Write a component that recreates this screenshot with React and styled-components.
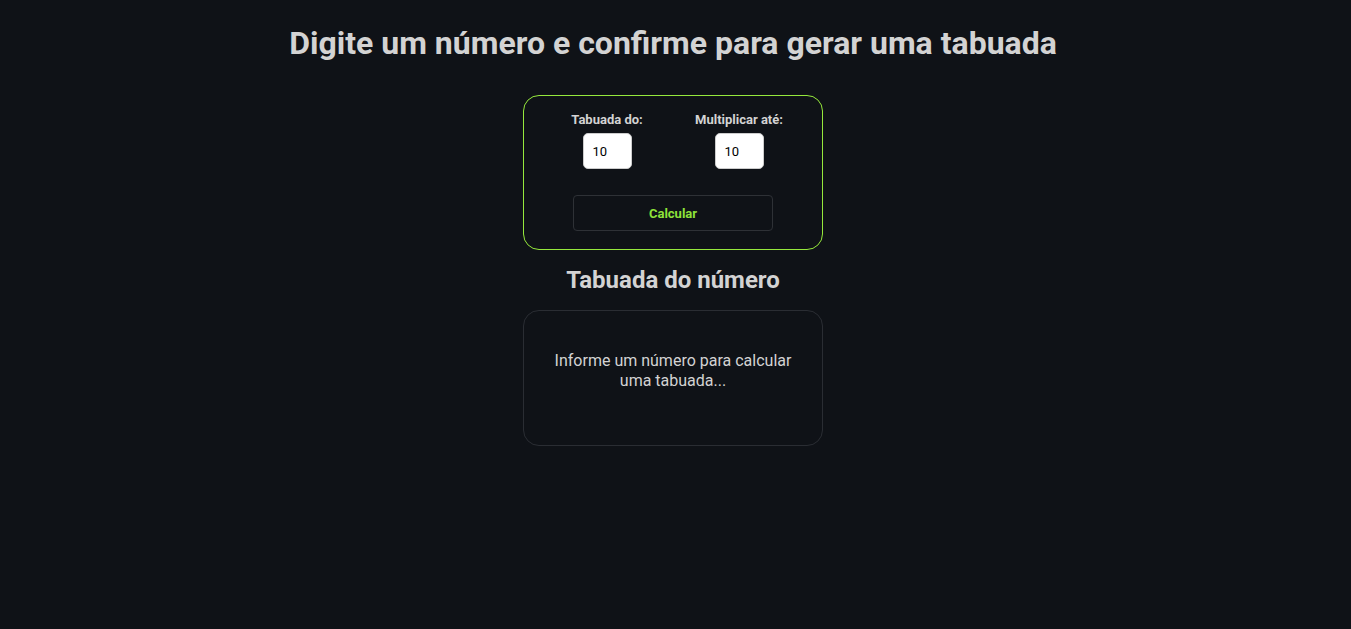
import React, { useState } from 'react';
import styled, { createGlobalStyle } from 'styled-components';

const GlobalStyle = createGlobalStyle`
  html, body {
    margin: 0;
    padding: 0;
    background-color: #0f1217;
    font-family: Roboto, "Liberation Sans", Arial, sans-serif;
  }
`;

const Page = styled.main`
  display: flex;
  flex-direction: column;
  align-items: center;
  min-height: 100vh;
  padding-right: 5px;
  color: #d3d3d3;
`;

const Title = styled.h1`
  font-size: 32px;
  font-weight: 700;
  margin: 24px 0 33px;
  line-height: 38px;
`;

const FormCard = styled.form`
  width: 300px;
  box-sizing: border-box;
  padding: 16px 0 18px;
  border: 1px solid #95e83c;
  border-radius: 16px;
  display: flex;
  flex-direction: column;
  align-items: center;
`;

const Fields = styled.div`
  display: grid;
  grid-template-columns: 100px 100px;
  column-gap: 32px;
`;

const Field = styled.div`
  display: flex;
  flex-direction: column;
  align-items: center;
  gap: 5px;

  label {
    font-size: 13px;
    font-weight: 700;
    line-height: 16px;
    color: #d3d3d3;
  }

  input {
    width: 49px;
    height: 36px;
    box-sizing: border-box;
    border: 1px solid #ccc;
    border-radius: 5px;
    padding: 0 9px;
    font-family: Roboto, "Liberation Sans", Arial, sans-serif;
    font-size: 13px;
    color: #000;
    background: #fff;
    outline: none;
  }
`;

const Button = styled.button`
  margin-top: 26px;
  width: 200px;
  height: 36px;
  background: transparent;
  border: 1px solid #2e3136;
  border-radius: 4px;
  color: #8ee33a;
  font-family: Roboto, "Liberation Sans", Arial, sans-serif;
  font-size: 13px;
  font-weight: 700;
  cursor: pointer;
`;

const Subtitle = styled.h2`
  font-size: 24px;
  font-weight: 700;
  line-height: 28px;
  margin: 16px 0 16px;
`;

const ResultCard = styled.div`
  width: 300px;
  height: 136px;
  box-sizing: border-box;
  border: 1px solid #2a2d33;
  border-radius: 16px;
  padding: 40px 24px 0;
  text-align: center;
  font-size: 16px;
  line-height: 20px;
  color: #d3d3d3;
`;

const App = () => {
  const [numero, setNumero] = useState('10');
  const [limite, setLimite] = useState('10');

  const handleSubmit = (e) => {
    e.preventDefault();
  };

  return (
    <Page>
      <GlobalStyle />
      <Title>Digite um número e confirme para gerar uma tabuada</Title>
      <FormCard onSubmit={handleSubmit}>
        <Fields>
          <Field>
            <label htmlFor="numero">Tabuada do:</label>
            <input id="numero" type="text" value={numero} onChange={(e) => setNumero(e.target.value)} />
          </Field>
          <Field>
            <label htmlFor="limite">Multiplicar até:</label>
            <input id="limite" type="text" value={limite} onChange={(e) => setLimite(e.target.value)} />
          </Field>
        </Fields>
        <Button type="submit">Calcular</Button>
      </FormCard>
      <Subtitle>Tabuada do número</Subtitle>
      <ResultCard>Informe um número para calcular uma tabuada...</ResultCard>
    </Page>
  );
};

export default App;
